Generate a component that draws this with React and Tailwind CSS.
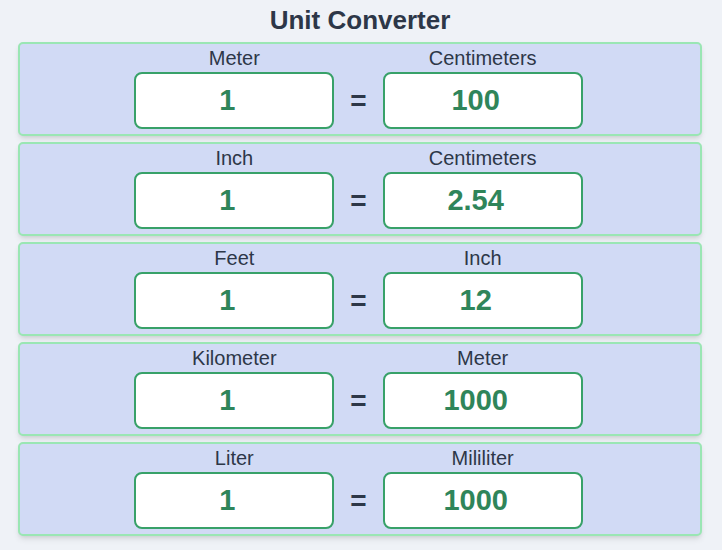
import React from "react";

const rows = [
  ["Meter", "Centimeters", "1", "100"],
  ["Inch", "Centimeters", "1", "2.54"],
  ["Feet", "Inch", "1", "12"],
  ["Kilometer", "Meter", "1", "1000"],
  ["Liter", "Mililiter", "1", "1000"],
];

function Field({ label, value }) {
  return (
    <div className="flex flex-col items-center">
      <div className="text-[20px] leading-[28px] text-[#2d3748]">{label}</div>
      <div className="w-[200px] h-[57px] bg-white border-2 border-[#38a169] rounded-[8px] flex items-center justify-center pr-[14px] text-[29px] font-bold text-[#2f855a]">
        {value}
      </div>
    </div>
  );
}

export default function App() {
  return (
    <div
      className="min-h-[550px] w-[722px] bg-[#eff2f7] pt-[4px] pl-[18px] flex flex-col gap-[6px]"
      style={{ fontFamily: '"Liberation Sans", Arial, sans-serif' }}
    >
      <h1 className="w-[684px] text-center text-[26px] leading-[32px] font-bold text-[#2d3748]">
        Unit Converter
      </h1>
      {rows.map(([a, b, va, vb], i) => (
        <div
          key={i}
          className="w-[684px] h-[94px] bg-[#d1daf5] border-2 border-[#9ae6b4] rounded-[5px] shadow-md flex items-end justify-center gap-4 pb-[5px] pr-[3px]"
        >
          <Field label={a} value={va} />
          <div className="h-[57px] flex items-center text-[28px] font-bold text-[#2d3748]">=</div>
          <Field label={b} value={vb} />
        </div>
      ))}
    </div>
  );
}
